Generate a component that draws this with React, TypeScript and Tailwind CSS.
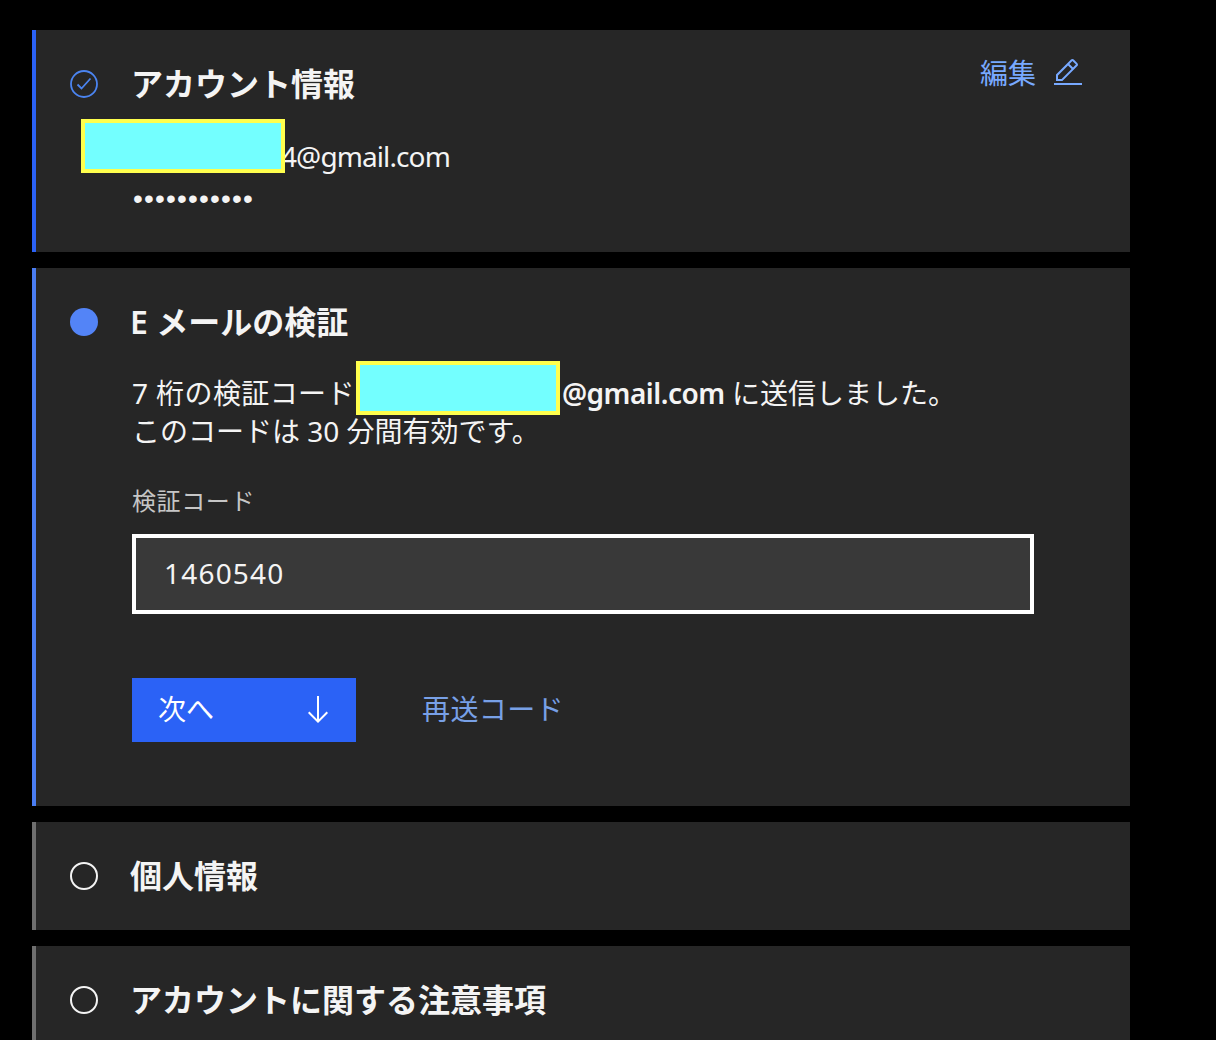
import React from 'react';

const sans = 'font-["Noto_Sans","Noto_Sans_CJK_JP",sans-serif]';

const Redacted = () => (
  <span className="relative -top-[9px] inline-block w-[204px] h-[54px] -my-[12px] ml-[1px] mr-[2px] align-middle border-[4px] border-[#ffff4d] bg-[#73ffff]" />
);

const OpenCircle = () => (
  <span className="block w-[28px] h-[28px] shrink-0 rounded-full border-2 border-[#f4f4f4]" />
);

const CheckCircle = () => (
  <svg width="28" height="28" viewBox="0 0 28 28" fill="none" className="shrink-0 text-[#4b84f0]" stroke="currentColor">
    <circle cx="14" cy="14" r="13" strokeWidth="1.8" />
    <path d="M7.5 14.5l4 4 9-10" strokeWidth="1.8" />
  </svg>
);

const EditIcon = () => (
  <svg width="32" height="32" viewBox="0 0 32 32" fill="currentColor">
    <path d="M2 26H30V28H2zM25.4 9c.8-.8.8-2 0-2.8l-3.6-3.6c-.8-.8-2-.8-2.8 0l-15 15V24h6.4L25.4 9zM20.4 4L24 7.6l-3 3L17.4 7 20.4 4zM6 22v-3.6l10-10 3.6 3.6-10 10H6z" />
  </svg>
);

const ArrowDown = () => (
  <svg width="32" height="32" viewBox="0 0 32 32" fill="currentColor">
    <path d="M24.59 17.59L17 25.17 17 2 15 2 15 25.17 7.41 17.59 6 19 16 29 26 19 24.59 17.59z" />
  </svg>
);

const StepHeading = ({ icon, title, wide }: { icon: React.ReactNode; title: string; wide?: boolean }) => (
  <div className={wide ? 'flex items-center gap-[33px] h-[40px]' : 'flex items-center gap-[32px] h-[40px]'}>
    {icon}
    <h2 className="text-[32px] leading-[40px] font-semibold text-[#f4f4f4] whitespace-nowrap">{title}</h2>
  </div>
);

export default function App() {
  return (
    <div className={`${sans} h-[1040px] overflow-hidden bg-black pt-[30px] pl-[32px] w-[1216px]`}>
      <div className="w-[1098px] flex flex-col gap-[16px]">
        {/* Account info */}
        <section className="relative h-[222px] bg-[#262626] border-l-4 border-[#2b62f6] pl-[34px] pt-[34px]">
          <StepHeading wide icon={<CheckCircle />} title="アカウント情報" />
          <a className="absolute right-[46px] top-[24px] flex items-center gap-[16px] text-[28px] leading-[38px] text-[#78a9ff]">
            編集
            <EditIcon />
          </a>
          <div className="relative mt-[33px] pl-[211px] text-[28px] leading-[38px] tracking-[-0.9px] text-[#f4f4f4] whitespace-nowrap">
            <span className="absolute left-[11px] top-[-18px] w-[204px] h-[54px] border-[4px] border-[#ffff4d] bg-[#73ffff]" />
            <span>4@gmail.com</span>
          </div>
          <div className="mt-[4px] pl-[63px] font-['Liberation_Sans',sans-serif] text-[28px] leading-[40px] tracking-[1.2px] text-[#f4f4f4]">
            •••••••••••
          </div>
        </section>

        {/* Email verification */}
        <section className="h-[538px] bg-[#262626] border-l-4 border-[#4a7df2] pl-[34px] pt-[34px]">
          <StepHeading icon={<span className="block w-[28px] h-[28px] shrink-0 rounded-full bg-[#5384f7]" />} title="E メールの検証" />
          <div className="pl-[62px]">
            <p className="mt-[32px] text-[28px] leading-[38px] text-[#f4f4f4] whitespace-nowrap">
              <span className="tracking-[0.4px]">7 桁の検証コード</span><Redacted /><span className="font-semibold tracking-[-0.5px]">@gmail.com</span> に送信しました。
              <br />
              このコードは 30 分間有効です。
            </p>
            <label className="block mt-[35px] text-[24px] leading-[32px] tracking-[0.6px] text-[#c6c6c6]">検証コード</label>
            <div className="mt-[17px] w-[902px] h-[80px] flex items-center pl-[28px] pb-[2px] bg-[#393939] border-[4px] border-white text-[28px] tracking-[1.2px] text-[#f4f4f4]">
              1460540
            </div>
            <div className="mt-[64px] flex items-center gap-[66px]">
              <button className="w-[224px] h-[64px] flex items-center justify-between pl-[26px] pr-[22px] bg-[#2b62f6] text-[28px] text-white">
                <span className="pb-[2px]">次へ</span>
                <ArrowDown />
              </button>
              <a className="pb-[2px] text-[28px] leading-[38px] tracking-[0.4px] text-[#78a0e6]">再送コード</a>
            </div>
          </div>
        </section>

        {/* Personal info */}
        <section className="h-[108px] bg-[#262626] border-l-4 border-[#6f6f6f] pl-[34px] pt-[34px]">
          <StepHeading icon={<OpenCircle />} title="個人情報" />
        </section>

        {/* Notices */}
        <section className="h-[108px] bg-[#262626] border-l-4 border-[#6f6f6f] pl-[34px] pt-[34px]">
          <StepHeading icon={<OpenCircle />} title="アカウントに関する注意事項" />
        </section>
      </div>
    </div>
  );
}
